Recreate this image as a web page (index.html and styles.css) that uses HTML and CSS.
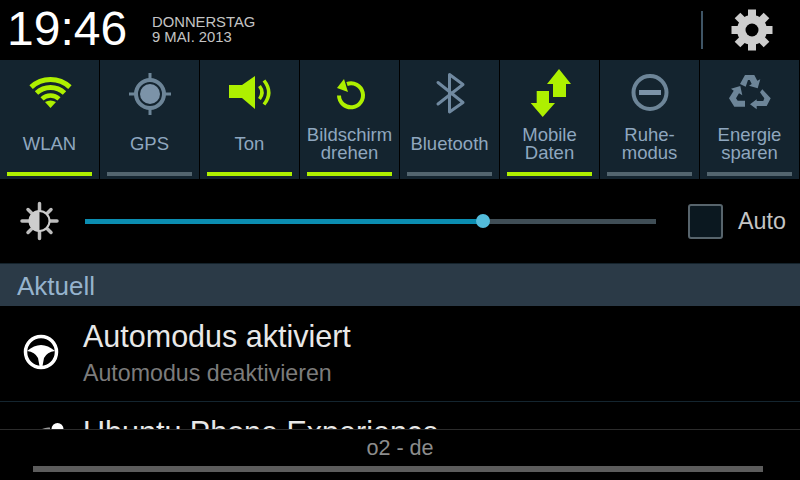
FILE: index.html
```html
<!DOCTYPE html>
<html lang="de">
<head>
  <meta charset="UTF-8" />
  <title>Benachrichtigungen</title>
  <link rel="stylesheet" href="styles.css">
</head>
<body>
  <div class="panel">

    <!--time, date, settings-->
    <div class="header">
      <div class="time">19:46</div>
      <div class="date">
        <div>DONNERSTAG</div>
        <div>9 MAI. 2013</div>
      </div>
      <div class="header-sep"></div>
      <svg class="gear" viewBox="0 0 44 44">
        <g transform="translate(22 22)" fill="#cdcdcd">
          <circle r="15" />
          <rect x="-4" y="-20.5" width="8" height="41" />
          <rect x="-4" y="-20.5" width="8" height="41" transform="rotate(45)" />
          <rect x="-4" y="-20.5" width="8" height="41" transform="rotate(90)" />
          <rect x="-4" y="-20.5" width="8" height="41" transform="rotate(135)" />
          <circle r="6.5" fill="#000" />
        </g>
      </svg>
    </div>

    <!--quick toggles-->
    <div class="toggles">
      <div class="toggle on">
        <svg class="toggle-icon" viewBox="0 0 59 60">
          <g fill="none" stroke="#aef000">
            <path d="M11.1 23.2A28.5 28.5 0 0 1 49.9 23.2" stroke-width="5" />
            <path d="M16.5 29A20.5 20.5 0 0 1 44.5 29" stroke-width="5" />
            <path d="M22 34.9A12.5 12.5 0 0 1 39 34.9" stroke-width="4.5" />
          </g>
          <path d="M30.5 44L25 38Q30.5 35 36 38Z" fill="#aef000" />
        </svg>
        <div class="toggle-label">WLAN</div>
        <div class="toggle-bar"></div>
      </div>

      <div class="toggle">
        <svg class="toggle-icon" viewBox="0 0 59 60">
          <circle cx="30" cy="30" r="14" fill="none" stroke="#6d8598" stroke-width="4" />
          <circle cx="30" cy="30" r="10" fill="#7c93a8" />
          <path d="M30 9V16M30 44V51M9 30H16M44 30H51" stroke="#6d8598" stroke-width="3" />
        </svg>
        <div class="toggle-label">GPS</div>
        <div class="toggle-bar"></div>
      </div>

      <div class="toggle on">
        <svg class="toggle-icon" viewBox="0 0 59 60">
          <path d="M9 21H22L35 12V45L22 34H9Z" fill="#aef000" />
          <path d="M39.5 22Q44.5 28.5 39.5 35M44 16.5Q53.5 28.5 44 40.5" fill="none" stroke="#aef000" stroke-width="3.5" />
        </svg>
        <div class="toggle-label">Ton</div>
        <div class="toggle-bar"></div>
      </div>

      <div class="toggle on">
        <svg class="toggle-icon" viewBox="0 0 59 60">
          <path d="M27 20A12 12 0 1 1 19 31.5" fill="none" stroke="#aef000" stroke-width="4" />
          <path d="M17 24L24 15L28 28Z" fill="#aef000" />
        </svg>
        <div class="toggle-label">Bildschirm drehen</div>
        <div class="toggle-bar"></div>
      </div>

      <div class="toggle">
        <svg class="toggle-icon" viewBox="0 0 59 60">
          <path d="M18 18.5L43 38.5L29.5 48V10.5L43 20.5L18 40" fill="none" stroke="#7089a0" stroke-width="3" stroke-linecap="round" stroke-linejoin="round" />
        </svg>
        <div class="toggle-label">Bluetooth</div>
        <div class="toggle-bar"></div>
      </div>

      <div class="toggle on">
        <svg class="toggle-icon" viewBox="0 0 59 60">
          <path d="M39 5L51 20H46V33H33V20H27Z" fill="#aef000" />
          <path d="M22.7 53L35 39H29V27H16.7V39H10.7Z" fill="#aef000" />
        </svg>
        <div class="toggle-label">Mobile Daten</div>
        <div class="toggle-bar"></div>
      </div>

      <div class="toggle">
        <svg class="toggle-icon" viewBox="0 0 59 60">
          <circle cx="30" cy="28.5" r="16.5" fill="none" stroke="#6d8598" stroke-width="4" />
          <rect x="19" y="26" width="22" height="5" fill="#7c93a8" />
        </svg>
        <div class="toggle-label">Ruhe-<br>modus</div>
        <div class="toggle-bar"></div>
      </div>

      <div class="toggle">
        <svg class="toggle-icon" viewBox="0 0 59 60">
          <g fill="#6d8598">
            <path d="M20 20L25 11H34.3L37.3 16.7L40.3 15.3L37.7 24.3L29 21.7L31.7 20L29.7 16H28L25.7 22.7Z" />
            <path d="M42.3 25.3L50.7 34.3L46.7 42H36.7V45.3L30 40.3L36.7 35.3V37H43.3L44.3 34.3L40 28.3Z" />
            <path d="M13.7 26.7L9 34.3L14.3 42.7H25V36.7H17.7L16 34.3L19 29.3L22.3 31.3L20.3 22L11 24.7Z" />
          </g>
        </svg>
        <div class="toggle-label">Energie sparen</div>
        <div class="toggle-bar"></div>
      </div>
    </div>

    <!--brightness-->
    <div class="brightness">
      <svg class="sun" viewBox="0 0 40 40">
        <path d="M19.5 2.5V9M19.5 31V37.5M2 20H9M30 20H37M8 8.5L11.5 12M27.5 28L31 31.5M8 31.5L11.5 28M27.5 12L31 8.5" stroke="#bdbdbd" stroke-width="3.5" stroke-linecap="round" />
        <circle cx="19.5" cy="20" r="10" fill="#000" stroke="#cdcdcd" stroke-width="2" />
        <path d="M19.5 9.5A10.5 10.5 0 0 0 19.5 30.5Z" fill="#cdcdcd" />
      </svg>
      <div class="slider">
        <div class="slider-fill"></div>
        <div class="slider-thumb"></div>
      </div>
      <div class="checkbox"></div>
      <div class="auto">Auto</div>
    </div>

    <div class="section">Aktuell</div>

    <!--notifications, second one is cut off by the footer-->
    <div class="notes">
      <div class="note">
        <svg class="note-icon" viewBox="0 0 36 36">
          <circle cx="18" cy="18" r="15.5" fill="none" stroke="#fff" stroke-width="3.5" />
          <path d="M4 17Q18 5 32 17Q24 18 21 24L19.5 32H16.5L15 24Q12 18 4 17Z" fill="#fff" />
        </svg>
        <div>
          <div class="note-title">Automodus aktiviert</div>
          <div class="note-sub">Automodus deaktivieren</div>
        </div>
      </div>
      <div class="note">
        <svg class="note-icon person" viewBox="0 0 42 42">
          <circle cx="34.5" cy="7" r="6" fill="#fff" />
          <path d="M19 7Q23 5 27 5.5V7Z" fill="#9a9a9a" />
        </svg>
        <div>
          <div class="note-title">Ubuntu Phone Experience</div>
        </div>
      </div>
    </div>

    <div class="footer">
      <div class="carrier">o2 - de</div>
      <div class="handle"></div>
    </div>

  </div>
</body>
</html>
```

FILE: styles.css
```css
* {
  box-sizing: border-box;
}

html, body {
  margin: 0;
  height: 100%;
  background: #000;
}

.panel {
  display: flex;
  flex-direction: column;
  width: 800px;
  height: 480px;
  overflow: hidden;
  font-family: "Liberation Sans", Arial, sans-serif;
}

/*top row*/
.header {
  display: flex;
  align-items: center;
  height: 60px;
  padding-left: 7px;
}

.time {
  font-size: 48px;
  color: #fff;
  width: 145px;
  margin-bottom: 3px;
}

.date {
  flex: 1;
  font-size: 14.8px;
  line-height: 15px;
  color: #c4c4c4;
}

.header-sep {
  width: 2px;
  height: 38px;
  background: #3f5566;
}

.gear {
  width: 44px;
  height: 44px;
  margin: 0 26px 0 27px;
}

/*toggle buttons*/
.toggles {
  display: flex;
  height: 119px;
}

.toggle {
  display: flex;
  flex-direction: column;
  align-items: center;
  width: 100px;
  padding-top: 4px;
  background: #14242f;
  border-right: 1px solid #000;
}

.toggle-icon {
  width: 59px;
  height: 60px;
}

.toggle-label {
  display: flex;
  align-items: center;
  justify-content: center;
  height: 40px;
  width: 96px;
  text-align: center;
  font-size: 18.5px;
  line-height: 18px;
  color: #8fa7bf;
}

.toggle-bar {
  width: 85px;
  height: 4px;
  margin-top: 8px;
  background: #53656f;
}

.toggle.on .toggle-bar {
  background: #aef000;
}

/*brightness slider*/
.brightness {
  display: flex;
  align-items: center;
  height: 85px;
  padding-left: 20px;
  border-bottom: 1px solid #14222b;
}

.sun {
  width: 40px;
  height: 40px;
}

.slider {
  position: relative;
  width: 571px;
  height: 5px;
  margin-left: 25px;
  background: #404e56;
}

.slider-fill {
  width: 398px;
  height: 5px;
  background: #0b8db1;
}

.slider-thumb {
  position: absolute;
  left: 391px;
  top: -5px;
  width: 14px;
  height: 14px;
  border-radius: 50%;
  background: #53bcdb;
}

.checkbox {
  width: 35px;
  height: 35px;
  margin-left: 32px;
  background: #0b1820;
  border: 2px solid #57646c;
  border-radius: 3px;
}

.auto {
  margin-left: 15px;
  font-size: 23.3px;
  color: #c4c4c4;
}

/*section title*/
.section {
  display: flex;
  align-items: center;
  height: 42px;
  padding-left: 17px;
  padding-top: 2px;
  background: #2b3a47;
  font-size: 26px;
  color: #96b3cd;
}

/*notifications*/
.notes {
  flex: 1;
  overflow: hidden;
}

.note {
  display: flex;
  align-items: flex-start;
  height: 96px;
  padding: 14px 0 0 23px;
  border-bottom: 1px solid #14252f;
}

.note-icon {
  flex: none;
  width: 36px;
  height: 36px;
  margin: 14px 24px 0 0;
}

.note-icon.person {
  width: 42px;
  height: 42px;
  margin: 6px 18px 0 0;
}

.note-title {
  font-size: 30.5px;
  line-height: 32px;
  white-space: nowrap;
  color: #e8e8e8;
}

.note-sub {
  margin-top: 9px;
  font-size: 23.2px;
  line-height: 24px;
  color: #7c7c7c;
}

/*carrier and drag handle*/
.footer {
  height: 51px;
  border-top: 1px solid #2c2c2c;
  text-align: center;
}

.carrier {
  height: 36px;
  font-size: 21.6px;
  line-height: 36px;
  color: #8c8c8c;
}

.handle {
  width: 730px;
  height: 6px;
  margin-left: 33px;
  background: #5c5c5c;
}
```
